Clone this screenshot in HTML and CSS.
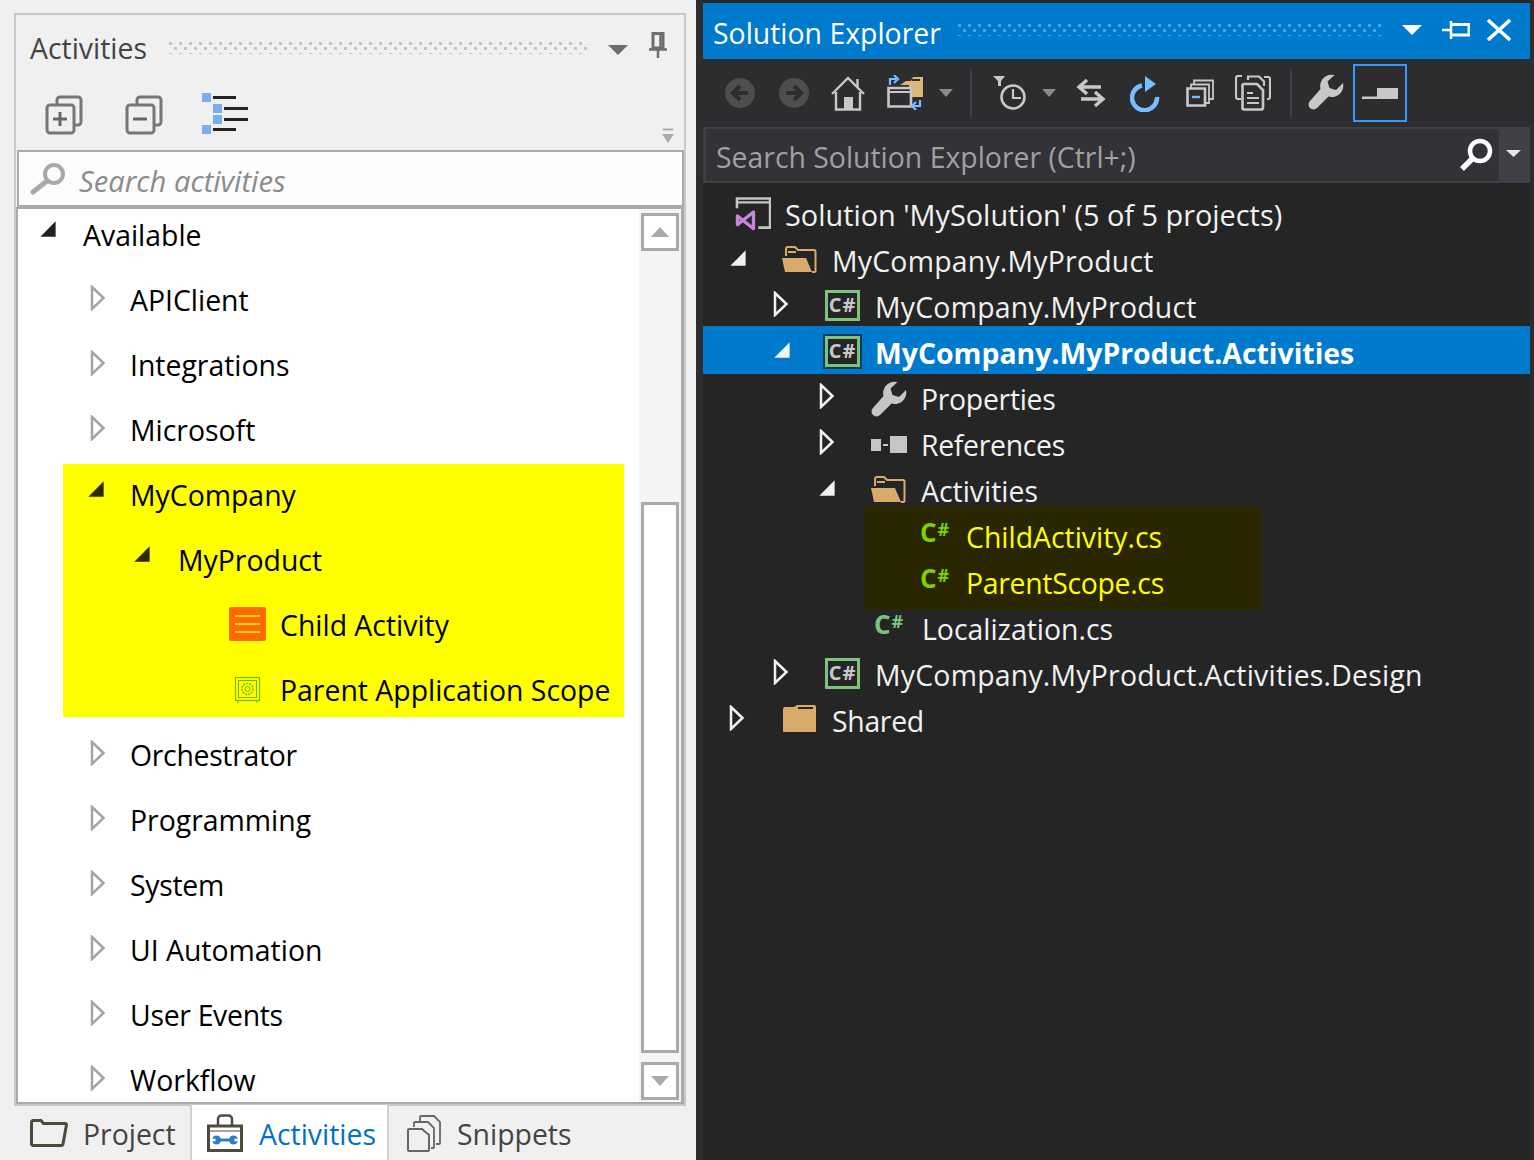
FILE: index.html
```html
<!DOCTYPE html>
<html lang="en">
<head>
<meta charset="utf-8">
<title>Activities and Solution Explorer</title>
<link rel="stylesheet" href="styles.css">
</head>
<body>
<svg class="sprite" aria-hidden="true">
  <symbol id="tw-open" viewBox="0 0 20 20"><path d="M1.500 18.500 18.500 1.500V18.500Z" fill="currentColor"/></symbol>
  <symbol id="tw-closed" viewBox="0 0 16 26"><path d="M2 2 13.500 13 2 24Z" fill="none" stroke="currentColor" stroke-width="2.500"/></symbol>
  <symbol id="folder-open" viewBox="0 0 36 30"><path d="M5 12V5a2 2 0 0 1 2-2h7l3 3h16a1.500 1.500 0 0 1 1.500 1.500V27a1 1 0 0 1-1 1H31" fill="none" stroke="#d7ac6a" stroke-width="2"/><path d="M1 14h24l6 14H4Z" fill="#d7ac6a"/><path d="M7 7h8v2H7z" fill="#d7ac6a"/></symbol>
  <symbol id="wrench" viewBox="0 0 36 36"><path d="M35 9 28 16l-6.500-2L19.500 7.500 26.500 1A11.500 11.500 0 0 0 12.500 15L2 27a4.500 4.500 0 0 0 7 7L20.500 22.500A11.500 11.500 0 0 0 35 9Z" fill="currentColor"/></symbol>
</svg>
<div class="app">
  <section class="left">
    <div class="panel">
      <header class="lhead">
        <h2 class="ltitle">Activities</h2>
        <div class="grip grip-light"></div>
        <svg class="lcaret" viewBox="0 0 20 10" width="20" height="10"><path d="M0 0H20L10 10Z" fill="#6d6d6d"/></svg>
        <svg class="lpin" viewBox="0 0 18 26" width="18" height="26"><path d="M4 1.500H14V16H4Z" fill="none" stroke="#6d6d6d" stroke-width="3"/><path d="M0 17.500H18M9 17.500V26M11.500 2V16" stroke="#6d6d6d" stroke-width="2.500" fill="none"/></svg>
      </header>
      <div class="ltools">
        <svg class="tool1" viewBox="0 0 38 40" width="38" height="40"><path d="M12 9V5a3 3 0 0 1 3-3h18a3 3 0 0 1 3 3v22a3 3 0 0 1-3 3h-4" fill="none" stroke="#777" stroke-width="3"/><rect x="2" y="10" width="27" height="28" rx="3" fill="none" stroke="#777" stroke-width="3"/><path d="M8 24H22M15 17V31" stroke="#666" stroke-width="3"/></svg>
        <svg class="tool2" viewBox="0 0 38 40" width="38" height="40"><path d="M12 9V5a3 3 0 0 1 3-3h18a3 3 0 0 1 3 3v22a3 3 0 0 1-3 3h-4" fill="none" stroke="#777" stroke-width="3"/><rect x="2" y="10" width="27" height="28" rx="3" fill="none" stroke="#777" stroke-width="3"/><path d="M8 24H22" stroke="#666" stroke-width="3"/></svg>
        <svg class="tool3" viewBox="0 0 46 41" width="46" height="41"><path d="M0 0H9V9H0ZM11 11H20V20H11ZM11 22H20V31H11ZM0 32H9V41H0Z" fill="#7aaeec"/><path d="M11 4.500H34M22 15.500H46M22 26.500H46M11 36.500H34" stroke="#222" stroke-width="3"/></svg>
        <svg class="overflow" viewBox="0 0 12 16" width="12" height="16"><path d="M1 1.500H11" stroke="#aaa" stroke-width="2"/><path d="M0 6H12L6 15Z" fill="#aaa"/></svg>
      </div>
      <div class="lsearch">
        <svg viewBox="0 0 36 32" width="36" height="32"><circle cx="24" cy="11" r="9" fill="none" stroke="#a9a9a9" stroke-width="4"/><path d="M17 18 3 29" stroke="#a9a9a9" stroke-width="5" stroke-linecap="round"/></svg>
        <span>Search activities</span>
      </div>
      <div class="ltree">
        <div class="llist">
          <div class="lrow l0"><svg class="ltw"><use href="#tw-open" x="4" y="9" width="18" height="18"/></svg><span>Available</span></div>
          <div class="lrow l1"><svg class="ltw closed"><use href="#tw-closed" x="8" y="9" width="16" height="26"/></svg><span>APIClient</span></div>
          <div class="lrow l1"><svg class="ltw closed"><use href="#tw-closed" x="8" y="9" width="16" height="26"/></svg><span>Integrations</span></div>
          <div class="lrow l1"><svg class="ltw closed"><use href="#tw-closed" x="8" y="9" width="16" height="26"/></svg><span>Microsoft</span></div>
          <div class="hl">
            <div class="lrow h1"><svg class="ltw"><use href="#tw-open" x="5" y="9" width="18" height="18"/></svg><span>MyCompany</span></div>
            <div class="lrow h2"><svg class="ltw"><use href="#tw-open" x="3" y="9" width="18" height="18"/></svg><span>MyProduct</span></div>
            <div class="lrow h3">
              <svg class="lico lico-orange" viewBox="0 0 37 34" width="37" height="34"><rect width="37" height="34" rx="2" fill="#ff6a00"/><path d="M6 9H31M6 17H31M6 25H31" stroke="#ffd200" stroke-width="2"/></svg>
              <span>Child Activity</span>
            </div>
            <div class="lrow h3">
              <svg class="lico lico-safe" viewBox="0 0 37 28" width="37" height="28"><rect x="6.500" y="1.500" width="24" height="23" fill="none" stroke="#6fbb00" stroke-width="1.200"/><rect x="9.500" y="4.500" width="18" height="17" fill="none" stroke="#6fbb00" stroke-width="1"/><circle cx="18.500" cy="13" r="5.500" fill="none" stroke="#6fbb00" stroke-width="1.400" stroke-dasharray="2 1"/><circle cx="18.500" cy="13" r="2.500" fill="none" stroke="#6fbb00"/><path d="M9 25v2M28 25v2" stroke="#6fbb00"/></svg>
              <span>Parent Application Scope</span>
            </div>
          </div>
          <div class="lrow l1"><svg class="ltw closed"><use href="#tw-closed" x="8" y="9" width="16" height="26"/></svg><span class="narrow">Orchestrator</span></div>
          <div class="lrow l1"><svg class="ltw closed"><use href="#tw-closed" x="8" y="9" width="16" height="26"/></svg><span>Programming</span></div>
          <div class="lrow l1"><svg class="ltw closed"><use href="#tw-closed" x="8" y="9" width="16" height="26"/></svg><span class="narrow">System</span></div>
          <div class="lrow l1"><svg class="ltw closed"><use href="#tw-closed" x="8" y="9" width="16" height="26"/></svg><span>UI Automation</span></div>
          <div class="lrow l1"><svg class="ltw closed"><use href="#tw-closed" x="8" y="9" width="16" height="26"/></svg><span class="narrow">User Events</span></div>
          <div class="lrow l1"><svg class="ltw closed"><use href="#tw-closed" x="8" y="9" width="16" height="26"/></svg><span>Workflow</span></div>
        </div>
        <div class="sbar">
          <div class="sbtn"><svg viewBox="0 0 18 10" width="18" height="10"><path d="M9 0 18 10H0Z" fill="#aaa"/></svg></div>
          <div class="sthumb"></div>
          <div class="sbtn"><svg viewBox="0 0 18 10" width="18" height="10"><path d="M0 0H18L9 10Z" fill="#aaa"/></svg></div>
        </div>
      </div>
    </div>
    <nav class="ltabs">
      <div class="ltab tab-project">
        <svg viewBox="0 0 38 28" width="38" height="28"><path d="M1.500 25V3a1.500 1.500 0 0 1 1.500-1.500h8l2.500 3h22a1 1 0 0 1 1 1.200L33 25a1.500 1.500 0 0 1-1.500 1.500H3A1.500 1.500 0 0 1 1.500 25Z" fill="none" stroke="#4f4a3c" stroke-width="3"/></svg>
        <span>Project</span>
      </div>
      <div class="ltab tab-active">
        <svg viewBox="0 0 36 38" width="36" height="38"><path d="M11 12V5a3.500 3.500 0 0 1 3.500-3.500h7A3.500 3.500 0 0 1 25 5v7" fill="none" stroke="#4f4a3c" stroke-width="2.500"/><path d="M1.500 12H34.500V36.500H1.500Z" fill="none" stroke="#4f4a3c" stroke-width="3"/><path d="M1 17H35" stroke="#4f4a3c"/><circle cx="9.500" cy="26" r="4.500" fill="#2f7fc8"/><circle cx="26.500" cy="26" r="4.500" fill="#2f7fc8"/><path d="M10 24.500H26V27.500H10Z" fill="#2f7fc8"/><path d="M5 24.700H8.500V27.300H5ZM27.500 24.700H31V27.300H27.500Z" fill="#fff"/></svg>
        <span>Activities</span>
      </div>
      <div class="ltab tab-snip">
        <svg viewBox="0 0 36 38" width="36" height="38"><path d="M14 7V3a1 1 0 0 1 1-1h13l6 6v21a1 1 0 0 1-1 1h-3" fill="none" stroke="#666" stroke-width="1.800"/><path d="M8 13V9a1 1 0 0 1 1-1h13l6 6v19a1 1 0 0 1-1 1h-2" fill="none" stroke="#666" stroke-width="1.800"/><path d="M2 16a1 1 0 0 1 1-1h13l7 6v15a1 1 0 0 1-1 1H3a1 1 0 0 1-1-1Z" fill="#f0f0f0" stroke="#666" stroke-width="2"/></svg>
        <span>Snippets</span>
      </div>
    </nav>
  </section>

  <section class="right">
    <header class="rhead">
      <h2 class="rtitle">Solution Explorer</h2>
      <div class="grip grip-blue"></div>
      <svg class="rcaret" viewBox="0 0 20 10" width="20" height="10"><path d="M0 0H20L10 10Z" fill="#fff"/></svg>
      <svg class="rpin" viewBox="0 0 28 20" width="28" height="20"><path d="M0 10H9M9 1V19" stroke="#fff" stroke-width="2.500" fill="none"/><path d="M10 4.500H27V15H10" fill="none" stroke="#fff" stroke-width="3"/></svg>
      <svg class="rclose" viewBox="0 0 24 22" width="24" height="22"><path d="M1 1 23 21M23 1 1 21" stroke="#fff" stroke-width="3.400"/></svg>
    </header>
    <div class="rtools">
      <svg class="rt nav1" viewBox="0 0 30 30" width="30" height="30"><circle cx="15" cy="15" r="15" fill="#4e4e50"/><path d="M23 15H9M15 8 8 15l7 7" fill="none" stroke="#2d2d30" stroke-width="4"/></svg>
      <svg class="rt nav2" viewBox="0 0 30 30" width="30" height="30"><circle cx="15" cy="15" r="15" fill="#4e4e50"/><path d="M7 15H21M15 8l7 7-7 7" fill="none" stroke="#2d2d30" stroke-width="4"/></svg>
      <svg class="rt home" viewBox="0 0 34 36" width="34" height="36"><path d="M1 19 17 3l16 16M26.500 4v9" fill="none" stroke="#c8c8c8" stroke-width="2.400"/><path d="M5 17V34.500H29V17" fill="none" stroke="#c8c8c8" stroke-width="2.400"/><path d="M13 22H22V34H13Z" fill="#c8c8c8"/></svg>
      <svg class="rt sync" viewBox="0 0 37 35" width="37" height="35"><path d="M13 10 19 6h5l2-4H36V22H22V10Z" fill="#dcb67a"/><path d="M25 5H33" stroke="#2d2d30" stroke-width="2"/><path d="M1.500 13H24V31.500H1.500Z" fill="#2d2d30" stroke="#c8c8c8" stroke-width="2.600"/><path d="M2 17H23" stroke="#c8c8c8" stroke-width="2"/><path d="M3 10V4H9M7 0l4 4-4 4" fill="none" stroke="#75beff" stroke-width="2.200"/><path d="M33 25V31H26M29 27l-4 4 4 4" fill="none" stroke="#75beff" stroke-width="2.200"/></svg>
      <svg class="rt car1" viewBox="0 0 14 8" width="14" height="8"><path d="M0 0H14L7 8Z" fill="#8a8a8a"/></svg>
      <i class="sep sep1"></i>
      <svg class="rt hist" viewBox="0 0 35 36" width="35" height="36"><path d="M0 0H12L8 5V10H5V5Z" fill="#c8c8c8"/><circle cx="20" cy="21" r="11.500" fill="none" stroke="#c8c8c8" stroke-width="2.600"/><path d="M20 13V22H28" fill="none" stroke="#c8c8c8" stroke-width="2.200"/></svg>
      <svg class="rt car2" viewBox="0 0 14 8" width="14" height="8"><path d="M0 0H14L7 8Z" fill="#8a8a8a"/></svg>
      <svg class="rt swap" viewBox="0 0 30 30" width="30" height="30"><path d="M4 9H25M11 2 3 9l8 7" fill="none" stroke="#c8c8c8" stroke-width="3.400"/><path d="M26 21H5M19 14l8 7-8 7" fill="none" stroke="#c8c8c8" stroke-width="3.400"/></svg>
      <svg class="rt refresh" viewBox="0 0 30 36" width="30" height="36"><path d="M12 9.500A12.500 12.500 0 1 0 27 21" fill="none" stroke="#75beff" stroke-width="4.500"/><path d="M15 0 26 8 15 16Z" fill="#75beff"/></svg>
      <svg class="rt coll" viewBox="0 0 28 28" width="28" height="28"><path d="M8 5V1.500H27V20H23" fill="none" stroke="#c8c8c8" stroke-width="1.800"/><path d="M5 9V5.500H23V24H19" fill="none" stroke="#c8c8c8" stroke-width="1.800"/><path d="M1.500 9.500H19V26.500H1.500Z" fill="none" stroke="#c8c8c8" stroke-width="2.600"/><path d="M6 18H14" stroke="#75beff" stroke-width="2.400"/></svg>
      <svg class="rt copy" viewBox="0 0 36 36" width="36" height="36"><path d="M6 24H3a2 2 0 0 1-2-2V3a2 2 0 0 1 2-2h4M29 2h4a2 2 0 0 1 2 2v18a2 2 0 0 1-2 2h-1" fill="none" stroke="#c8c8c8" stroke-width="2.200"/><path d="M13 5V1.500H24l5 5V11" fill="none" stroke="#c8c8c8" stroke-width="2.200"/><path d="M9 9H22l6 6V33a1.500 1.500 0 0 1-1.500 1.500H9A1.500 1.500 0 0 1 7.500 33V10.500A1.500 1.500 0 0 1 9 9Z" fill="#2d2d30" stroke="#c8c8c8" stroke-width="2.600"/><path d="M12 18H18M12 23H24M12 28H24" stroke="#c8c8c8" stroke-width="2.200"/></svg>
      <i class="sep sep2"></i>
      <svg class="rt wr"><use href="#wrench" width="36" height="36"/></svg>
      <div class="rt-active"><svg viewBox="0 0 36 11" width="36" height="11"><path d="M15 0H36V11H0V8.500H15Z" fill="#c8c8c8"/></svg></div>
    </div>
    <div class="rsearch">
      <span class="rs-text">Search Solution Explorer (Ctrl+;)</span>
      <svg class="rs-ico" viewBox="0 0 34 34" width="34" height="34"><circle cx="21" cy="13" r="10" fill="none" stroke="#fff" stroke-width="4.500"/><path d="M13 21 3 31" stroke="#fff" stroke-width="5.500"/></svg>
      <div class="rs-drop"><svg viewBox="0 0 15 7" width="15" height="7"><path d="M0 0H15L7.500 7Z" fill="#e6e6e6"/></svg></div>
    </div>
    <div class="rtree">
      <div class="rrow r0">
        <svg class="rico" viewBox="0 0 37 36" width="36" height="36"><path d="M2 12V2H36V32H24" fill="none" stroke="#c5c5c5" stroke-width="2.600"/><path d="M2 6H35" stroke="#c5c5c5" stroke-width="2.400"/><path d="M2.500 20V29L19 16V33Z" fill="none" stroke="#c586db" stroke-width="3.400" stroke-linejoin="round"/></svg>
        <span class="sol-name">Solution 'MySolution' (5 of 5 projects)</span>
      </div>
      <div class="rrow r1"><svg class="rtw"><use href="#tw-open" x="3" y="11" width="18" height="18"/></svg><svg class="rico fold" viewBox="0 0 36 30" width="36" height="30"><use href="#folder-open"/></svg><span class="wide">MyCompany.MyProduct</span></div>
      <div class="rrow r2"><svg class="rtw"><use href="#tw-closed" x="4" y="7" width="16" height="26"/></svg><b class="csbox">C#</b><span class="wide">MyCompany.MyProduct</span></div>
      <div class="rrow r2 sel"><svg class="rtw"><use href="#tw-open" x="4" y="11" width="18" height="18"/></svg><b class="csbox csbox-sel">C#</b><span>MyCompany.MyProduct.Activities</span></div>
      <div class="rrow r3"><svg class="rtw"><use href="#tw-closed" x="4" y="7" width="16" height="26"/></svg><svg class="rico wrench-ico"><use href="#wrench" width="36" height="36"/></svg><span class="narrow">Properties</span></div>
      <div class="rrow r3"><svg class="rtw"><use href="#tw-closed" x="4" y="7" width="16" height="26"/></svg><svg class="rico" viewBox="0 0 36 18" width="36" height="18"><path d="M0 3H10V15H0ZM19 0H36V17H19ZM12 8H17V10H12Z" fill="#c5c5c5"/></svg><span class="narrow">References</span></div>
      <div class="rrow r3"><svg class="rtw"><use href="#tw-open" x="3" y="11" width="18" height="18"/></svg><svg class="rico fold" viewBox="0 0 36 30" width="36" height="30"><use href="#folder-open"/></svg><span>Activities</span></div>
      <div class="rhl">
        <div class="rrow hlrow"><b class="cs cs-lime">C<sup>#</sup></b><span>ChildActivity.cs</span></div>
        <div class="rrow hlrow"><b class="cs cs-lime">C<sup>#</sup></b><span class="narrow">ParentScope.cs</span></div>
      </div>
      <div class="rrow r4"><b class="cs">C<sup>#</sup></b><span>Localization.cs</span></div>
      <div class="rrow r2"><svg class="rtw"><use href="#tw-closed" x="4" y="7" width="16" height="26"/></svg><b class="csbox">C#</b><span class="wide">MyCompany.MyProduct.Activities.Design</span></div>
      <div class="rrow r1"><svg class="rtw"><use href="#tw-closed" x="3" y="7" width="16" height="26"/></svg><svg class="rico fold" viewBox="0 0 36 30" width="36" height="30"><path d="M2 27V5a2 2 0 0 1 2-2h9l3-2h17a2 2 0 0 1 2 2v25H3a1 1 0 0 1-1-1Z" fill="#d7ac6a"/><path d="M17 4H32" stroke="#252526" stroke-width="2"/></svg><span class="narrow">Shared</span></div>
    </div>
  </section>
  <div class="edge"></div>
</div>
</body>
</html>
```
FILE: styles.css
```css
* { box-sizing: border-box; }
html, body { margin: 0; height: 100%; }
body {
  width: 1534px;
  height: 1160px;
  overflow: hidden;
  background: #2d2d30;
  font-family: "Open Sans", "Noto Sans", sans-serif;
  font-size: 28.4px;
}
h2 { margin: 0; font: inherit; }
.sprite { position: absolute; width: 0; height: 0; }
svg { display: block; flex: none; }
.narrow { letter-spacing: -0.3px; }
.wide { letter-spacing: 0.23px; }

.app { display: flex; height: 1160px; }

/* left window */
.left {
  width: 696px;
  flex: none;
  background: #f0f0f0;
  padding-top: 13px;
  display: flex;
  flex-direction: column;
}
.panel {
  margin-left: 14px;
  width: 672px;
  height: 1093px;
  border: 2px solid #c8c8c8;
  display: flex;
  flex-direction: column;
  flex: none;
}
.lhead {
  height: 62px;
  padding: 2px 17px 0 14px;
  display: flex;
  align-items: center;
  flex: none;
}
.ltitle { color: #444; width: 139px; flex: none; margin-top: 2px; }
.grip { height: 12px; background-repeat: repeat; }
.grip-light {
  width: 420px;
  background-image:
    radial-gradient(circle at 1.500px 1.500px, #c2c2c2 1.400px, transparent 1.500px),
    radial-gradient(circle at 1.500px 1.500px, #c2c2c2 1.400px, transparent 1.500px);
  background-size: 10px 11px;
  background-position: 0 0, 5px 5px;
  margin-top: 2px;
}
.lcaret { margin-left: 21px; margin-top: 6px; }
.lpin { margin-left: 21px; margin-top: -4px; }
.ltools {
  height: 73px;
  flex: none;
  display: flex;
  align-items: center;
  padding-left: 29px;
}
.tool1 { margin-top: 2px; }
.tool2 { margin-left: 42px; margin-top: 2px; }
.tool3 { margin-left: 39px; }
.overflow { margin-left: auto; margin-right: 10px; margin-top: 44px; }
.lsearch {
  margin-left: 1px;
  width: 667px;
  height: 57px;
  flex: none;
  background: #fcfcfc;
  border: 2px solid #aaa;
  display: flex;
  align-items: center;
  padding: 0 0 0 11px;
  color: #8b8b8b;
  font-style: italic;
}
.lsearch span { margin-left: 13px; padding-top: 4px; font-size: 29.2px; }
.ltree {
  flex: 1;
  min-height: 0;
  background: #fff;
  border: 2px solid #aaa;
  border-right-width: 3px;
  display: flex;
  overflow: hidden;
  width: 668px;
}
.llist { flex: 1; margin-top: -5px; min-width: 0; color: #000; }
.lrow { height: 65px; padding-bottom: 4px; display: flex; align-items: center; }
.ltw { width: 48px; height: 42px; color: #222; flex: none; margin-top: -6px; }
.ltw.closed { color: #a4a4a4; }
.l0 { padding-left: 17px; }
.l1 { padding-left: 64px; }
.hl {
  margin-left: 45px;
  width: 561px;
  height: 253px;
  margin-bottom: 7px;
  background: #ff0;
}
.hl .ltw { color: #2e2a00; }
.h1 { padding-left: 19px; }
.h2 { padding-left: 67px; }
.h3 { padding-left: 166px; }
.lico { margin-right: 14px; }
.lico-orange { margin-top: -2px; }
.lico-safe { margin-top: 0; }
.sbar {
  width: 42px;
  flex: none;
  background: #f4f4f4;
  padding: 4px 2px 2px;
  display: flex;
  flex-direction: column;
}
.sbtn {
  height: 38px;
  flex: none;
  border: 3px solid #aaa;
  background: #fff;
  display: flex;
  align-items: center;
  justify-content: center;
}
.sthumb {
  flex: 1;
  margin: 251px 0 9px;
  border: 3px solid #aaa;
  background: #fff;
}

.ltabs { flex: 1; display: flex; }
.ltab { height: 54px; display: flex; align-items: center; color: #444; flex: none; }
.ltab span { padding-top: 2px; }
.tab-project { width: 190px; padding-left: 30px; gap: 15px; }
.tab-active {
  width: 199px;
  padding-left: 15px;
  gap: 16px;
  background: #fff;
  color: #0072c6;
  border-left: 2px solid #d0d0d0;
  border-right: 2px solid #d0d0d0;
  margin-top: -1px;
  height: 55px;
}
.tab-snip { padding-left: 17px; gap: 15px; }

/* right window */
.right {
  width: 827px;
  flex: none;
  margin-left: 7px;
  padding-top: 3px;
  display: flex;
  flex-direction: column;
  background: #252526;
}
.edge { flex: 1; background: #2d2d30; }
.rhead {
  height: 56px;
  flex: none;
  background: #007acc;
  color: #fff;
  display: flex;
  align-items: center;
  padding-left: 10px;
}
.rtitle { width: 245px; flex: none; margin-top: 3px; }
.grip-blue {
  width: 424px;
  background-image:
    radial-gradient(circle at 1.500px 1.500px, #4fa6e0 1.400px, transparent 1.500px),
    radial-gradient(circle at 1.500px 1.500px, #4fa6e0 1.400px, transparent 1.500px);
  background-size: 10px 11px;
  background-position: 0 0, 5px 5px;
  margin-top: -3px;
}
.rcaret { margin-left: 20px; margin-top: -3px; }
.rpin { margin-left: 20px; margin-top: -2px; }
.rclose { margin-left: 17px; margin-top: -3px; }

.rtools {
  height: 68px;
  flex: none;
  background: #2d2d30;
  display: flex;
  align-items: center;
}
.nav1 { margin-left: 22px; }
.nav2 { margin-left: 24px; }
.home { margin-left: 22px; }
.sync { margin-left: 22px; margin-top: -2px; }
.car1 { margin-left: 15px; }
.sep { width: 2px; height: 48px; flex: none; background: #3f3f46; }
.sep1 { margin-left: 17px; }
.hist { margin-left: 21px; margin-top: 2px; }
.car2 { margin-left: 14px; }
.swap { margin-left: 20px; }
.refresh { margin-left: 24px; margin-top: 2px; }
.coll { margin-left: 26px; }
.copy { margin-left: 21px; margin-top: -1px; }
.sep2 { margin-left: 19px; }
.wr { width: 36px; height: 36px; color: #c8c8c8; margin-left: 16px; margin-top: -2px; }
.rt-active {
  width: 54px;
  height: 58px;
  margin-left: 9px;
  border: 2px solid #3399ff;
  display: flex;
  align-items: center;
  justify-content: center;
}
.rsearch {
  height: 56px;
  flex: none;
  background: #333337;
  border: 2px solid #3f3f46;
  border-left-width: 3px;
  border-right: 0;
  display: flex;
  align-items: center;
  color: #a0a0a0;
  padding-left: 10px;
  background-clip: padding-box;
}
.rs-text { flex: 1; padding-top: 3px; }
.rs-ico { margin-right: 6px; margin-top: 0; }
.rs-drop {
  width: 31px;
  height: 52px;
  background: #3f3f46;
  display: flex;
  align-items: center;
  justify-content: center;
  padding-right: 3px;
  padding-bottom: 4px;
}
.rtree { flex: 1; padding-top: 10px; color: #f1f1f1; }
.rrow { height: 46px; padding-bottom: 2px; display: flex; align-items: center; }
.rtw { width: 56px; height: 46px; color: #f1f1f1; flex: none; }
.rico { margin-right: 14px; flex: none; }
.fold { margin: -5px 15px 0 -1px; }
.wrench-ico { width: 36px; height: 36px; color: #c5c5c5; }
.sol-name { font-size: 28.85px; }
.r0 { padding-left: 32px; padding-bottom: 4px; }
.r1 { padding-left: 23px; }
.r2 { padding-left: 66px; }
.r3 { padding-left: 112px; }
.r4 { padding-left: 168px; }
.r4 .cs { width: 48px; }
.sel {
  height: 48px;
  margin: -5px 0 3px;
  padding-top: 6px;
  padding-bottom: 0;
  background: #007acc;
  color: #fff;
  font-weight: 700;
}
.csbox {
  width: 35px;
  height: 31px;
  margin: -3px 15px 0 0;
  flex: none;
  border: 3px solid #7cc47c;
  background: #252526;
  color: #c8c8c8;
  font-family: "Open Sans", sans-serif;
  font-size: 20px;
  font-weight: 700;
  letter-spacing: 1px;
  line-height: 24px;
  text-align: center;
}
.csbox-sel { outline: 2px solid #0f3a5a; }
.cs {
  width: 46px;
  flex: none;
  color: #7cc47c;
  font-size: 26px;
  font-weight: 700;
  line-height: 1;
  margin-top: -10px;
  margin-left: 3px;
}
.cs sup { font-size: 18px; vertical-align: 6px; line-height: 0; margin-left: 1px; }
.cs-lime { color: #7fd000; }
.rhl {
  margin: -9px 0 -3px 161px;
  width: 397px;
  padding: 9px 0 3px;
  height: 104px;
  background: #2a2600;
  color: #ff0;
}
.hlrow { padding-left: 53px; }
```
